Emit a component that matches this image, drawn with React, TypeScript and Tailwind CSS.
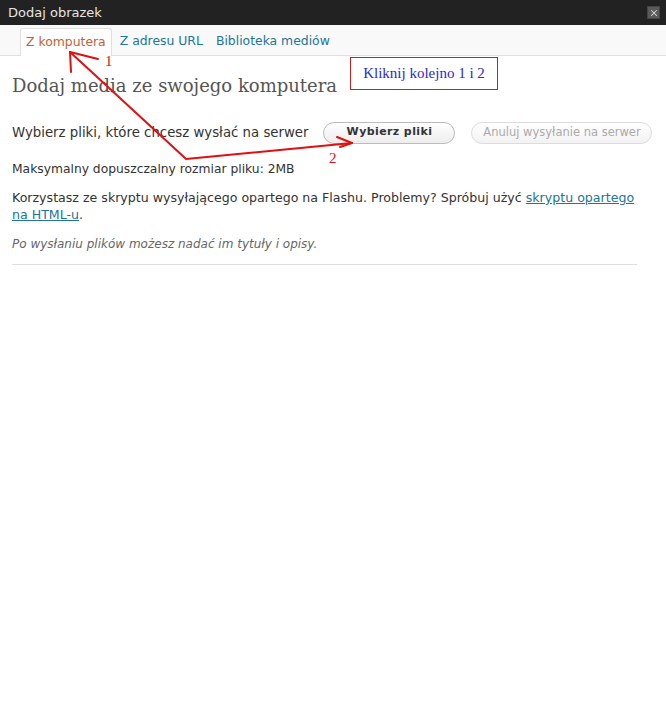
import { X } from "lucide-react";

const tabs = [
  { label: "Z komputera", active: true },
  { label: "Z adresu URL", active: false },
  { label: "Biblioteka mediów", active: false },
];

const sans = "font-['DejaVu_Sans',Verdana,sans-serif]";

export default function App() {
  return (
    <div className="relative w-[666px] h-[710px] bg-white overflow-hidden">
      {/* Title bar */}
      <div className="h-[25px] bg-[#222222] flex items-center justify-between pl-2 pr-[6px]">
        <span className={`${sans} text-[13px] text-[#e5e5e5]`}>Dodaj obrazek</span>
        <button className="w-[13px] h-[13px] bg-[#5a5a5a] flex items-center justify-center border border-[#444]">
          <X size={10} strokeWidth={2.5} className="text-[#dddddd]" />
        </button>
      </div>

      {/* Tabs */}
      <div className="h-[31px] bg-[#f9f9f9] border-b border-[#dfdfdf] flex items-end pl-5 gap-[3px]">
        {tabs.map((t) =>
          t.active ? (
            <div
              key={t.label}
              className={`${sans} h-[28px] -mb-px px-[5px] flex items-center bg-white border border-b-0 border-[#dfdfdf] rounded-t-[3px] text-[12.4px] text-[#c0623a]`}
            >
              {t.label}
            </div>
          ) : (
            <div
              key={t.label}
              className={`${sans} h-[28px] px-[5px] flex items-center text-[12.4px] text-[#21759b]`}
            >
              {t.label}
            </div>
          )
        )}
      </div>

      {/* Content */}
      <div className={`${sans} px-3 text-[#333]`}>
        <h3 className="mt-[16px] font-['DejaVu_Serif',Georgia,serif] text-[18px] text-[#555] leading-[28px]">
          Dodaj media ze swojego komputera
        </h3>

        <div className="mt-[21px] flex items-center h-[23px]">
          <span className="text-[13.3px]">Wybierz pliki, które chcesz wysłać na serwer</span>
          <button className="ml-[15px] w-[132px] h-[22px] rounded-full border border-[#bbbbbb] bg-gradient-to-b from-white to-[#ededed] text-[11px] font-bold text-[#333] tracking-[0.4px]">
            Wybierz pliki
          </button>
          <button className="ml-4 w-[181px] h-[22px] rounded-full border border-[#dddddd] bg-gradient-to-b from-white to-[#f2f2f2] text-[11.5px] text-[#aaaaaa]">
            Anuluj wysyłanie na serwer
          </button>
        </div>

        <p className="mt-[16px] text-[12.3px] leading-[18px]">Maksymalny dopuszczalny rozmiar pliku: 2MB</p>

        <p className="mt-[11px] text-[12.6px] leading-[17px] w-[640px]">
          Korzystasz ze skryptu wysyłającego opartego na Flashu. Problemy? Spróbuj użyć{" "}
          <a className="text-[#21759b] underline">skryptu opartego na HTML-u</a>.
        </p>

        <p className="mt-[12px] italic text-[#666] text-[12px] leading-[18px]">
          Po wysłaniu plików możesz nadać im tytuły i opisy.
        </p>

        <div className="mt-[11px] w-[625px] border-t border-[#dfdfdf]" />
      </div>

      {/* Annotation box */}
      <div className="absolute left-[350px] top-[57px] w-[148px] h-[33px] border border-[#c82020] bg-white flex items-center justify-center font-['Liberation_Serif',serif] text-[15px] text-[#2a2ad0]">
        Kliknij kolejno 1 i 2
      </div>

      {/* Red annotation arrows */}
      <svg className="absolute inset-0 pointer-events-none" width="666" height="710">
        <g stroke="#e01010" strokeWidth="2" fill="none" strokeLinecap="round">
          <path d="M185 158 L70 52" />
          <path d="M70 52 L71 72" />
          <path d="M70 52 L98 59" />
          <path d="M186 159 L352 143" />
          <path d="M352 143 L337 137" />
          <path d="M352 143 L340 147" />
        </g>
        <text x="105" y="66" fill="#e01010" fontFamily="Liberation Serif, serif" fontSize="15">1</text>
        <text x="329" y="163" fill="#e01010" fontFamily="Liberation Serif, serif" fontSize="15">2</text>
      </svg>
    </div>
  );
}
